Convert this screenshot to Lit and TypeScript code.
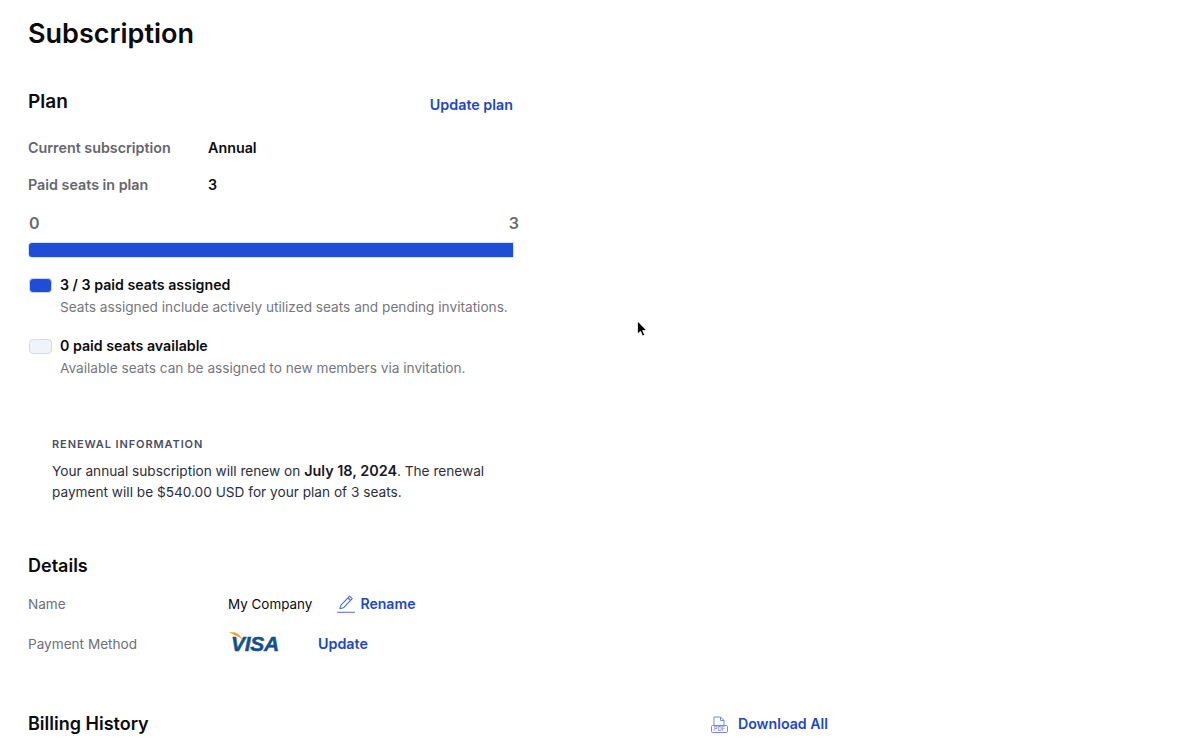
import { LitElement, html, css } from "lit";
import { customElement } from "lit/decorators.js";

@customElement("app-root")
export class AppRoot extends LitElement {
  static styles = css`
    :host { display: block; height: 750px; overflow: hidden; position: relative; background: #fff; font-family: Inter, "Liberation Sans", sans-serif; color: #0b0b0f; -webkit-font-smoothing: antialiased; }
    .page { display: flex; flex-direction: column; padding: 17px 0 0 28px; }
    h1 { margin: 0; font-size: 27px; line-height: 34px; font-weight: 600; }
    .plan { width: 485px; margin-top: 39px; display: flex; flex-direction: column; }
    .plan-head { display: flex; justify-content: space-between; align-items: flex-start; height: 24px; }
    h2 { margin: 0; font-size: 19px; line-height: 24px; font-weight: 600; }
    a { color: #1c47c4; font-weight: 600; font-size: 14.3px; line-height: 20px; }
    .plan-head a { margin-top: 5px; }
    .kv { display: grid; grid-template-columns: 180px 1fr; row-gap: 17px; margin-top: 24px; font-size: 14.3px; line-height: 20px; font-weight: 600; }
    .kv .k { color: #66666c; }
    .scale { display: flex; justify-content: space-between; margin: 18px -6px 0 0; padding-left: 1px; font-size: 16px; line-height: 20px; font-weight: 600; color: #6a6a70; }
    .bar { height: 14px; margin: 10px 0 0 0.5px; background: #1f4dd6; border-radius: 3px 0 0 3px; box-shadow: 0 0 0 1px #d7def5; }
    .legend { display: grid; grid-template-columns: 22px 1fr; column-gap: 10px; margin-top: 17px; }
    .legend + .legend { margin-top: 17px; }
    .sw { width: 23px; height: 15px; margin: 4px 0 0 0.5px; border-radius: 4px; box-sizing: border-box; background: #1f4dd6; border: 1px solid #c8d3f3; }
    .sw.free { background: #f1f3fb; border-color: #d5d8e6; }
    .lt { font-size: 14.2px; line-height: 22px; font-weight: 600; }
    .ld { grid-column: 2; font-size: 13.65px; line-height: 22px; color: #76767c; white-space: nowrap; }
    .renew { margin: 57px 0 0 24px; }
    .eyebrow { font-size: 11px; line-height: 16px; font-weight: 600; letter-spacing: 0.9px; color: #4a4f66; }
    .renew p { margin: 8px 0 0; font-size: 13.65px; line-height: 21px; color: #2c2f3a; }
    .renew b { font-size: 14.4px; font-weight: 600; color: #17181f; }
    .details { margin-top: 51px; }
    .details h3, .billing h3 { margin: 0; font-size: 18px; line-height: 24px; font-weight: 600; }
    .dr { display: flex; align-items: center; height: 24px; font-size: 13.6px; margin-top: 16px; }
    .dr.first { margin-top: 14px; }
    .dk { width: 200px; color: #6e6e74; }
    .dv { font-size: 13.45px; }
    .rn { display: flex; align-items: center; margin-left: 25px; gap: 5px; font-size: 14.1px; }
    .visa { position: relative; width: 47px; margin-left: 3px; height: 20px; font: italic 700 21px/20px "Liberation Sans", sans-serif; color: #16508c; -webkit-text-stroke: 0.5px #16508c; letter-spacing: -0.3px; }
    .visa svg { position: absolute; left: -2px; top: -2px; }
    .dr a.u { margin-left: 40px; }
    .billing { width: 800px; display: flex; justify-content: space-between; align-items: center; margin-top: 56px; }
    .dl { display: flex; align-items: center; gap: 10px; font-size: 14.2px; }
    .cursor { position: absolute; left: 636px; top: 320px; }
  `;
  render() {
    return html`
      <div class="page">
        <h1>Subscription</h1>
        <section class="plan">
          <div class="plan-head"><h2>Plan</h2><a>Update plan</a></div>
          <div class="kv">
            <div class="k">Current subscription</div><div>Annual</div>
            <div class="k">Paid seats in plan</div><div>3</div>
          </div>
          <div class="scale"><span>0</span><span>3</span></div>
          <div class="bar"></div>
          <div class="legend">
            <div class="sw"></div><div class="lt">3 / 3 paid seats assigned</div>
            <div class="ld">Seats assigned include actively utilized seats and pending invitations.</div>
          </div>
          <div class="legend">
            <div class="sw free"></div><div class="lt">0 paid seats available</div>
            <div class="ld">Available seats can be assigned to new members via invitation.</div>
          </div>
          <div class="renew">
            <div class="eyebrow">RENEWAL INFORMATION</div>
            <p>Your annual subscription will renew on <b>July 18, 2024</b>. The renewal<br />payment will be $540.00 USD for your plan of 3 seats.</p>
          </div>
        </section>
        <section class="details">
          <h3>Details</h3>
          <div class="dr first">
            <div class="dk">Name</div><div class="dv">My Company</div>
            <a class="rn">
              <svg width="18" height="18" viewBox="0 0 18 18" fill="none" stroke="#4a6cd6" stroke-width="1.1" stroke-linejoin="round"><path d="M12.6 1.2l2.6 2.4-8.8 9.2-3.500 1 .9-3.500z"/><path d="M11 3l2.6 2.500"/><path d="M.5 17.200h17" stroke-linecap="round"/></svg>
              Rename
            </a>
          </div>
          <div class="dr">
            <div class="dk">Payment Method</div>
            <div class="visa">
              VISA
              <svg width="14" height="8" viewBox="0 0 14 8"><path d="M0 .5C5-.2 10.500.5 13 7.500 10 4.500 5 2.500 0 .5z" fill="#f0a12c"/></svg>
            </div>
            <a class="u">Update</a>
          </div>
        </section>
        <section class="billing">
          <h3>Billing History</h3>
          <a class="dl">
            <svg width="17" height="17" viewBox="0 0 17 17" fill="none" stroke="#6d8be0" stroke-width="1"><path d="M3 9V1h6.500L13 4.500V9"/><path d="M9.500 1v3.500H13"/><rect x=".5" y="9.500" width="16" height="7" rx="1"/><text x="8.500" y="15" font-size="5.500" font-weight="600" text-anchor="middle" fill="#6d8be0" stroke="none" font-family="Inter, sans-serif">PDF</text></svg>
            Download All
          </a>
        </section>
      </div>
      <svg class="cursor" width="12" height="19" viewBox="0 0 12 19"><path d="M1.500 1v13l3-2.700 2 4.700 2.200-1-2-4.500h4z" fill="#000" stroke="#fff" stroke-width=".8"/></svg>
    `;
  }
}
